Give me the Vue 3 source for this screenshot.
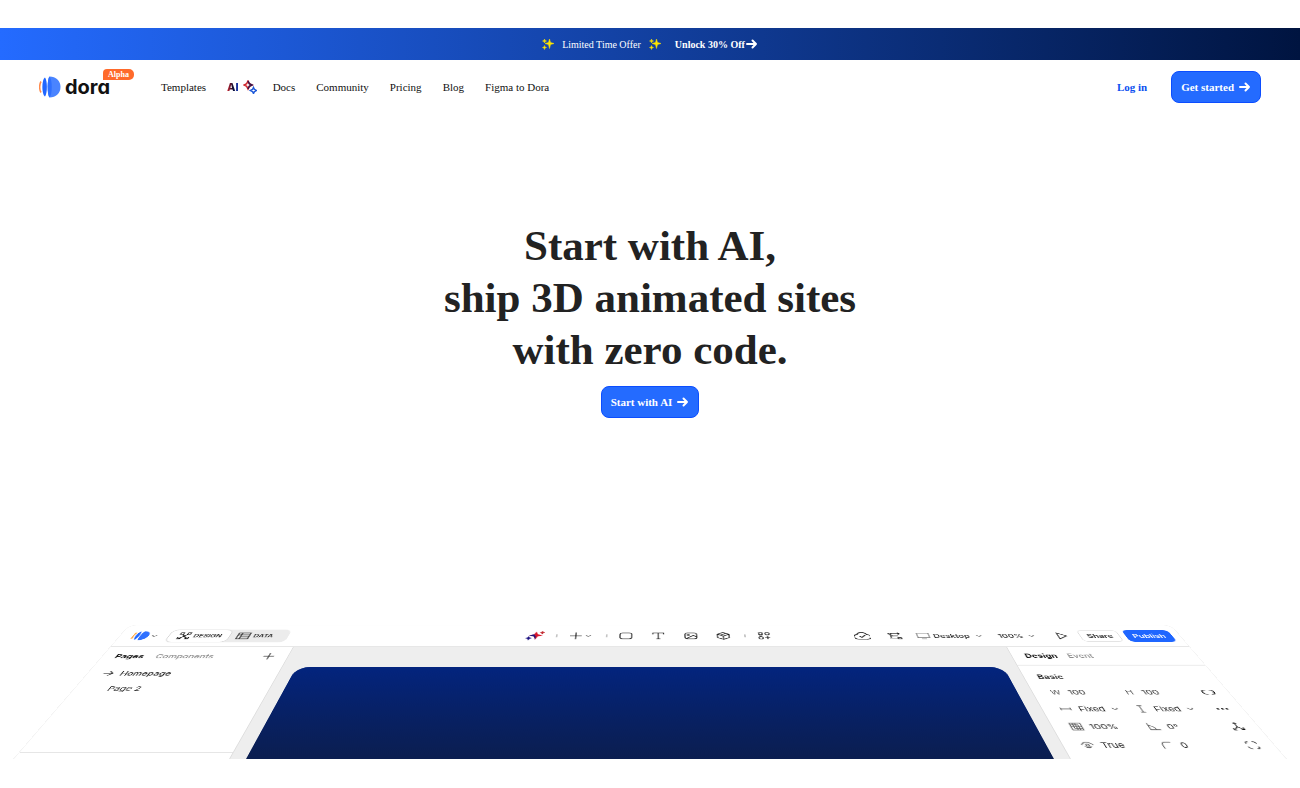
<script setup>
const links = ['Docs', 'Community', 'Pricing', 'Blog', 'Figma to Dora']

const sparkle = 'M7.5 1l1 3.5L12 5.500 8.500 6.500l-1 4-1-4L3 5.500l3.500-1zM2.500 1l.5 1.500 1.500.5L3 3.500 2.500 5 2 3.500.5 3 2 2.500zM2.500 7.500L3 9l1.500.5L3 10l-.5 1.500L2 10 .5 9.500 2 9z'
const go = 'M1 6h9M6.5 2.500L10 6 6.500 9.500'

const icons = {
  chevron: 'M4.5 6.500l3.500 3 3.500-3',
  plus: 'M8 1v14M1 8h14',
  arrow: 'M2 8h12M9 3.500L14 8 9 12.500',
  bar: 'M8 2v12',
  rect: 'M4 2h8a3 3 0 0 1 3 3v6a3 3 0 0 1-3 3H4a3 3 0 0 1-3-3V5a3 3 0 0 1 3-3z',
  text: 'M1.5 5V2h13v3M8 2v12M5.500 14h5',
  image: 'M4 2h8a3 3 0 0 1 3 3v6a3 3 0 0 1-3 3H4a3 3 0 0 1-3-3V5a3 3 0 0 1 3-3zM3 13l8-6 4 3M4 5.500h2v1.500H4z',
  cube: 'M8 1l7 3.500v7L8 15l-7-3.500v-7zM1 4.500l7 4 7-4M8 8.500V15M4.500 6.500L11 3',
  parts: 'M2 1.500h4v4H2zM12 1a2.500 2.500 0 1 1 0 5 2.500 2.500 0 0 1 0-5zM4 9.500a2.500 2.500 0 1 1 0 5 2.500 2.500 0 0 1 0-5zM12 8v6.500M9 11h6M2 8h4',
  cloud: 'M4 14a4 4 0 0 1-.5-8 5 5 0 0 1 9.500 0A4 4 0 0 1 12 14zM5.500 9l2 2 4-4',
  nodes: 'M1 2.500h3v2H1zM4 3.500h10M12 1.500l2 2-2 2M3 8h9M5 7v2M1 12.500h10M11 11.500h4v2.500h-4zM3 4.500v8',
  desktop: 'M1 2.500h14v9H1zM5 14h6',
  play: 'M4 2l10 6-10 6z',
  design: 'M5 5l8 9M11 5L3 14M2 1.500h3.500V5H2zM10.500 1.500H14V5h-3.500zM1.500 10.500H5V14H1.500zM11 10.500h3.500V14H11z',
  data: 'M1 2h14v12H1zM5 2v12M1 6h14M5 10h10',
  link: 'M6 4H4.500a4 4 0 0 0 0 8H6M10 4h1.500a4 4 0 0 1 0 8H10M1 8h1.500M13 8h2',
  horizontal: 'M2 8h12M2 5.500v5M14 5.500v5',
  vertical: 'M8 2v12M5 2h6M5 14h6',
  dots: 'M2 7.500h1.500v1H2zM7.500 7.500H9v1H7.500zM13 7.500h1.500v1H13z',
  opacity: 'M1.5 2h13v12h-13zM2 5h3v3h3v3h3v3M5 2v3h3v3h3v3h3M8 2v3h3v3h3M2 8h3v3h3v3',
  angle: 'M2 2v11.500h12M2 6a7.500 7.500 0 0 1 7 7.500',
  tree: 'M8 1.500v7M8 8.500L3 13M8 8.500l5 4M6 3l2-2 2 2M2 10.500V14h3M11 13h3.500v-3.500',
  eye: 'M1 8c3-6 11-6 14 0M4 10c2 3 6 3 8 0M8 6a2 2 0 1 1 0 4 2 2 0 0 1 0-4zM8 7.500v1',
  corner: 'M3 14V8a5 5 0 0 1 5-5h6',
  corners: 'M2 5.500V5a3 3 0 0 1 3-3h.5M10.500 2h.5a3 3 0 0 1 3 3v.5M14 10.500v.5a3 3 0 0 1-3 3h-.5M5.500 14H5a3 3 0 0 1-3-3v-.5'
}

const tools = [
  { name: 'rect', label: 'Shape' },
  { name: 'text', label: 'Text' },
  { name: 'image', label: 'Image' },
  { name: 'cube', label: '3D object' }
]

const rows = [
  { a: { glyph: 'W', value: '100', label: 'Width' }, b: { glyph: 'H', value: '100', label: 'Height' }, action: 'link', actionLabel: 'Lock ratio' },
  { a: { icon: 'horizontal', value: 'Fixed', label: 'Width mode', select: true, chevron: true }, b: { icon: 'vertical', value: 'Fixed', label: 'Height mode', select: true, chevron: true }, action: 'dots', actionLabel: 'More' },
  { a: { icon: 'opacity', value: '100%', label: 'Opacity' }, b: { icon: 'angle', value: '0°', label: 'Rotation' }, action: 'tree', actionLabel: 'Axes' },
  { a: { icon: 'eye', value: 'True', label: 'Visible', select: true }, b: { icon: 'corner', value: '0', label: 'Radius' }, action: 'corners', actionLabel: 'Corners' }
]
</script>

<template>
  <div class="page">
    <div class="banner">
      <svg class="sparkle" viewBox="0 0 12 12" aria-hidden="true"><path :d="sparkle" /></svg>
      <span class="offer">Limited Time Offer</span>
      <svg class="sparkle" viewBox="0 0 12 12" aria-hidden="true"><path :d="sparkle" /></svg>
      <a href="#" class="unlock">Unlock 30% Off
        <svg class="go" viewBox="0 0 12 12" aria-hidden="true"><path :d="go" /></svg>
      </a>
    </div>

    <header class="header">
      <a href="#" class="brand">
        <svg class="mark" viewBox="0 0 22 22" aria-hidden="true">
          <path d="M2 5.500C.2 8.500.2 13.500 2 16.500" fill="none" stroke="#ff8a4c" stroke-width="1.500" />
          <path d="M6 1.500C2.500 3.500 2.500 18.500 6 20.500 8.500 18 8.500 4 6 1.500z" fill="#2166ff" />
          <path d="M10.500 .5C8 3 8 19 10.500 21.500 17 21.500 21.500 17 21.500 11S17 .5 10.500 .5z" fill="#4a84ff" />
          <path d="M10.500 .5C8 3 8 19 10.500 21.500c3-3 3-18 0-21z" fill="#2f70ff" />
        </svg>
        <span class="wordmark">dora</span>
        <span class="badge">Alpha</span>
      </a>
      <nav class="nav">
        <a href="#">Templates</a>
        <a href="#" class="ai">
          <span class="ai-word">AI</span>
          <svg class="ai-stars" viewBox="0 0 14 14" aria-hidden="true">
            <path d="M5 1l1.300 2.700L9 5 6.300 6.300 5 9 3.700 6.300 1 5l2.700-1.300z" stroke="#d0252c" />
            <path d="M5 1l1.300 2.700L9 5 6.300 6.300 5 9" stroke="#38174c" />
            <path d="M10.500 7.500l1 2 2 1-2 1-1 2-1-2-2-1 2-1z" stroke="#1d58d8" />
          </svg>
        </a>
        <a v-for="l in links" :key="l" href="#">{{ l }}</a>
      </nav>
      <div class="account">
        <a href="#" class="login">Log in</a>
        <button type="button" class="cta">Get started
          <svg class="go" viewBox="0 0 12 12" aria-hidden="true"><path :d="go" /></svg>
        </button>
      </div>
    </header>

    <main class="hero">
      <h1>Start with AI,<br />ship 3D animated sites<br />with zero code.</h1>
      <button type="button" class="cta">Start with AI
        <svg class="go" viewBox="0 0 12 12" aria-hidden="true"><path :d="go" /></svg>
      </button>
    </main>

    <section class="stage" aria-label="Editor preview">
      <div class="editor">
        <div class="toolbar">
          <div class="side">
            <svg class="mini" viewBox="0 0 22 22" aria-hidden="true">
              <path d="M2 4C0 8 0 14 2 18" fill="none" stroke="#ffab4a" stroke-width="3" />
              <path d="M7 1C3 4 3 18 7 21c2.500-4 2.500-16 0-20z" fill="#2166ff" />
              <path d="M12 .5C9.500 3 9.500 19 12 21.500 18 21.500 22 17 22 11S18 .5 12 .5z" fill="#2f70ff" />
            </svg>
            <svg class="icon small" viewBox="0 0 16 16"><path :d="icons.chevron" /></svg>
            <div class="modes">
              <button type="button" class="mode on"><svg class="icon" viewBox="0 0 16 16"><path :d="icons.design" /></svg>DESIGN</button>
              <button type="button" class="mode"><svg class="icon" viewBox="0 0 16 16"><path :d="icons.data" /></svg>DATA</button>
            </div>
          </div>

          <div class="tools">
            <button type="button" aria-label="AI">
              <svg class="stars" viewBox="0 0 24 20">
                <path d="M13 1l2.500 6L22 9.500 15.500 12 13 19l-2.500-7L4 9.500 10.500 7z" fill="#d8162b" />
                <path d="M13 19l-2.500-7L4 9.500 10.500 7 13 12z" fill="#20157c" />
                <path d="M21 0l1 2.500 2 .5-2 1-1 2.500-1-2.500-2-1 2-.5z" fill="#c0262c" stroke="#c0262c" />
                <path d="M4 12l1 2.500 3 1-3 1L4 20l-1-3.500-3-1 3-1z" fill="#1a1080" stroke="#1a1080" />
              </svg>
            </button>
            <svg class="icon sep" viewBox="0 0 16 16"><path :d="icons.bar" /></svg>
            <button type="button" class="add" aria-label="Add">
              <svg class="icon" viewBox="0 0 16 16"><path :d="icons.plus" /></svg>
              <svg class="icon small" viewBox="0 0 16 16"><path :d="icons.chevron" /></svg>
            </button>
            <svg class="icon sep" viewBox="0 0 16 16"><path :d="icons.bar" /></svg>
            <div class="shapes">
              <button v-for="t in tools" :key="t.name" type="button" :aria-label="t.label">
                <svg class="icon" viewBox="0 0 16 16"><path :d="icons[t.name]" /></svg>
              </button>
            </div>
            <svg class="icon sep" viewBox="0 0 16 16"><path :d="icons.bar" /></svg>
            <button type="button" aria-label="Components"><svg class="icon" viewBox="0 0 16 16"><path :d="icons.parts" /></svg></button>
          </div>

          <div class="side right">
            <button type="button" aria-label="Sync"><svg class="icon wide" viewBox="0 0 16 16"><path :d="icons.cloud" /></svg></button>
            <button type="button" class="flow" aria-label="Flow"><svg class="icon" viewBox="0 0 16 16"><path :d="icons.nodes" /></svg></button>
            <label class="pick device">
              <svg class="icon screen" viewBox="0 0 16 16"><path :d="icons.desktop" /></svg>
              <select aria-label="Device"><option>Desktop</option></select>
              <svg class="icon small" viewBox="0 0 16 16"><path :d="icons.chevron" /></svg>
            </label>
            <label class="pick">
              <select aria-label="Zoom"><option>100%</option></select>
              <svg class="icon small" viewBox="0 0 16 16"><path :d="icons.chevron" /></svg>
            </label>
            <button type="button" class="play" aria-label="Preview"><svg class="icon" viewBox="0 0 16 16"><path :d="icons.play" /></svg></button>
            <button type="button" class="share">Share</button>
            <button type="button" class="publish">Publish</button>
          </div>
        </div>

        <div class="work">
          <aside class="pages">
            <div class="tabs">
              <button type="button" class="tab on">Pages</button>
              <button type="button" class="tab">Components</button>
              <button type="button" class="new" aria-label="New page"><svg class="icon dark" viewBox="0 0 16 16"><path :d="icons.plus" /></svg></button>
            </div>
            <a href="#" class="item"><svg class="icon dark" viewBox="0 0 16 16"><path :d="icons.arrow" /></svg>Homepage</a>
            <a href="#" class="item other"><span></span>Page 2</a>
            <div class="foot"></div>
          </aside>

          <div class="board"><div class="canvas"></div></div>

          <aside class="props">
            <div class="tabs ruled">
              <button type="button" class="tab on">Design</button>
              <button type="button" class="tab">Event</button>
            </div>
            <h2>Basic</h2>
            <div v-for="(r, i) in rows" :key="i" class="prop">
              <template v-for="f in [r.a, r.b]" :key="f.label">
                <span v-if="f.glyph" class="glyph">{{ f.glyph }}</span>
                <svg v-else class="icon pale" viewBox="0 0 16 16"><path :d="icons[f.icon]" /></svg>
                <div class="field">
                  <select v-if="f.select" :aria-label="f.label"><option>{{ f.value }}</option></select>
                  <input v-else type="text" :value="f.value" :aria-label="f.label" />
                  <svg v-if="f.chevron" class="icon small" viewBox="0 0 16 16"><path :d="icons.chevron" /></svg>
                </div>
              </template>
              <button type="button" :aria-label="r.actionLabel"><svg class="icon dark" viewBox="0 0 16 16"><path :d="icons[r.action]" /></svg></button>
            </div>
          </aside>
        </div>
      </div>
    </section>
  </div>
</template>

<style>
body {
  margin: 0;
  background: #fff;
}
</style>

<style scoped>
* {
  box-sizing: border-box;
}
.page {
  padding: 28px 0;
  font-family: "Liberation Serif", "Times New Roman", serif;
  color: #111;
  overflow: hidden;
}
a {
  color: inherit;
  text-decoration: none;
}
button,
select,
input {
  font: inherit;
  color: inherit;
  margin: 0;
  padding: 0;
  border: 0;
  background: none;
}
svg {
  display: block;
  flex: none;
}
.banner {
  height: 32px;
  display: flex;
  align-items: center;
  justify-content: center;
  gap: 8px;
  background: linear-gradient(90deg, #246bff, #001440);
  color: #fff;
  font-size: 10px;
}
.sparkle {
  width: 12px;
  height: 12px;
  fill: #ffe600;
  stroke: #ffe600;
  stroke-width: 0.5;
}
.unlock {
  display: flex;
  align-items: center;
  gap: 1px;
  margin-left: 6px;
  font-weight: 700;
}
.go {
  width: 12px;
  height: 12px;
  fill: none;
  stroke: #fff;
  stroke-width: 2;
  stroke-linecap: round;
  stroke-linejoin: round;
}
.header {
  height: 54px;
  padding: 0 39px;
  display: flex;
  align-items: center;
  font-size: 11px;
}
.brand {
  position: relative;
  display: flex;
  align-items: center;
  gap: 4px;
  width: 95px;
}
.mark {
  width: 22px;
  height: 22px;
}
.wordmark {
  font-family: Inter, "Liberation Sans", sans-serif;
  font-feature-settings: "cv11";
  font-weight: 700;
  font-size: 20px;
  line-height: 22px;
}
.badge {
  position: absolute;
  right: 0;
  top: -7px;
  width: 31px;
  height: 11px;
  border-radius: 4px 5px 5px 0;
  background: #ff6a2b;
  color: #fff;
  font-size: 8px;
  font-weight: 700;
  line-height: 11px;
  text-align: center;
}
.nav {
  display: flex;
  align-items: center;
  gap: 21px;
  margin-left: 27px;
}
.ai {
  display: flex;
  align-items: center;
  gap: 4px;
  margin-right: -5px;
}
.ai-word {
  font-family: Inter, "Liberation Sans", sans-serif;
  font-weight: 800;
  font-size: 11px;
  background: linear-gradient(90deg, #d8232e, #0c0c2c 50%, #1a3fd0);
  -webkit-background-clip: text;
  background-clip: text;
  color: transparent;
}
.ai-stars {
  width: 14px;
  height: 14px;
  fill: none;
  stroke-width: 1.5;
}
.account {
  display: flex;
  align-items: center;
  gap: 24px;
  margin-left: auto;
  font-weight: 700;
}
.login {
  color: #0b4ff0;
}
.cta {
  display: flex;
  align-items: center;
  gap: 5px;
  height: 32px;
  padding: 0 9px;
  border: 1px solid #0b4dff;
  border-radius: 8px;
  background: #246bff;
  color: #fff;
  font-size: 11px;
  font-weight: 700;
  cursor: pointer;
}
.hero {
  display: flex;
  flex-direction: column;
  align-items: center;
  gap: 10px;
  padding: 106px 0 160px;
}
h1 {
  margin: 0;
  font-size: 43px;
  line-height: 52px;
  font-weight: 700;
  text-align: center;
  color: #222;
}

/* The editor lies on a tilted plane hinged at the bottom of the stage. */
.stage {
  height: 181px;
  display: flex;
  align-items: flex-end;
  justify-content: center;
  overflow: hidden;
  perspective: 737px;
  perspective-origin: 50% 100%;
}
.editor {
  flex: none;
  width: 98%;
  transform: rotateX(45deg);
  transform-origin: 50% 100%;
  border: 1px solid #f3f3f3;
  border-bottom: 0;
  border-radius: 10px 10px 0 0;
  background: #fff;
  font-family: Inter, "Liberation Sans", sans-serif;
  font-size: 11px;
  font-weight: 500;
  color: #222;
}
.icon {
  width: 16px;
  height: 16px;
  fill: none;
  stroke: #111;
  stroke-width: 1.2;
}
.icon.small {
  width: 14px;
  height: 14px;
  stroke: #555;
}
.icon.dark {
  width: 14px;
  height: 14px;
}
.icon.pale {
  width: 14px;
  height: 14px;
  stroke: #555;
}
.icon.screen {
  stroke: #777;
}
.icon.sep {
  width: 8px;
  stroke: #888;
  stroke-width: 2;
}
.icon.wide {
  width: 19px;
  height: 19px;
}
.toolbar {
  height: 44px;
  display: grid;
  grid-template-columns: 1fr auto 1fr;
  align-items: center;
  border-bottom: 1px solid #dedede;
}
.side {
  display: flex;
  align-items: center;
  padding-left: 15px;
}
.side.right {
  justify-content: flex-end;
  padding: 0 9px 0 0;
}
.mini {
  width: 19px;
  height: 19px;
}
.modes {
  display: flex;
  height: 26px;
  width: 144px;
  margin-left: 10px;
  border-radius: 8px;
  background: #ececec;
}
.mode {
  display: flex;
  align-items: center;
  gap: 4px;
  padding-left: 8px;
  border-radius: 8px;
  font-size: 9px;
  font-weight: 600;
}
.mode.on {
  width: 74px;
  gap: 3px;
  padding-left: 10px;
  border: 1px solid #d4d4d4;
  background: #fff;
}
.tools {
  display: flex;
  align-items: center;
  gap: 11px;
  padding-right: 4px;
}
.stars {
  width: 22px;
  height: 19px;
}
.add {
  display: flex;
  align-items: center;
}
.shapes {
  display: flex;
  gap: 23px;
  padding-right: 3px;
}
.flow {
  margin: 0 18px 0 22px;
}
.pick {
  display: flex;
  align-items: center;
  gap: 3px;
  margin-left: 16px;
}
.pick.device {
  margin-left: 0;
  gap: 4px;
}
select {
  appearance: none;
}
.play {
  margin: 0 14px 0 21px;
}
.share,
.publish {
  height: 24px;
  border-radius: 6px;
  font-weight: 600;
}
.share {
  width: 48px;
  border: 1px solid #ddd;
}
.publish {
  width: 56px;
  margin-left: 7px;
  background: #1f66ff;
  color: #fff;
}
.work {
  display: grid;
  grid-template-columns: 216px 1fr 216px;
  height: 187px;
}
.pages {
  display: flex;
  flex-direction: column;
  border-right: 1px solid #dedede;
}
.tabs {
  display: flex;
  align-items: center;
  gap: 14px;
  height: 36px;
  padding: 0 15px;
}
.tabs.ruled {
  gap: 12px;
  border-bottom: 2px solid #eee;
}
.tab {
  color: #888;
}
.tab.on {
  color: #111;
  font-weight: 700;
}
.new {
  margin-left: auto;
}
.item {
  display: grid;
  grid-template-columns: 14px 1fr;
  align-items: center;
  gap: 7px;
  height: 27px;
  padding-left: 16px;
}
.item.other {
  font-weight: 400;
}
.foot {
  height: 10px;
  margin-top: auto;
  border-top: 1px solid #dedede;
}
.board {
  display: flex;
  padding: 38px 16px 0;
  background: #eee;
}
.canvas {
  flex: 1;
  border-radius: 16px 16px 0 0;
  background: linear-gradient(#03247e, #0b1e50);
}
.props {
  border-left: 1px solid #dedede;
}
h2 {
  margin: 7px 0 0;
  padding-left: 15px;
  font-size: 11px;
  line-height: 26px;
  font-weight: 600;
}
.prop {
  display: grid;
  grid-template-columns: 14px 53px 14px 59px 14px;
  column-gap: 7px;
  align-items: center;
  height: 28px;
  padding-left: 18px;
  font-weight: 400;
}
.glyph {
  color: #555;
  text-align: center;
}
.field {
  display: flex;
  align-items: center;
  gap: 3px;
  min-width: 0;
}
input {
  width: 100%;
}
</style>
